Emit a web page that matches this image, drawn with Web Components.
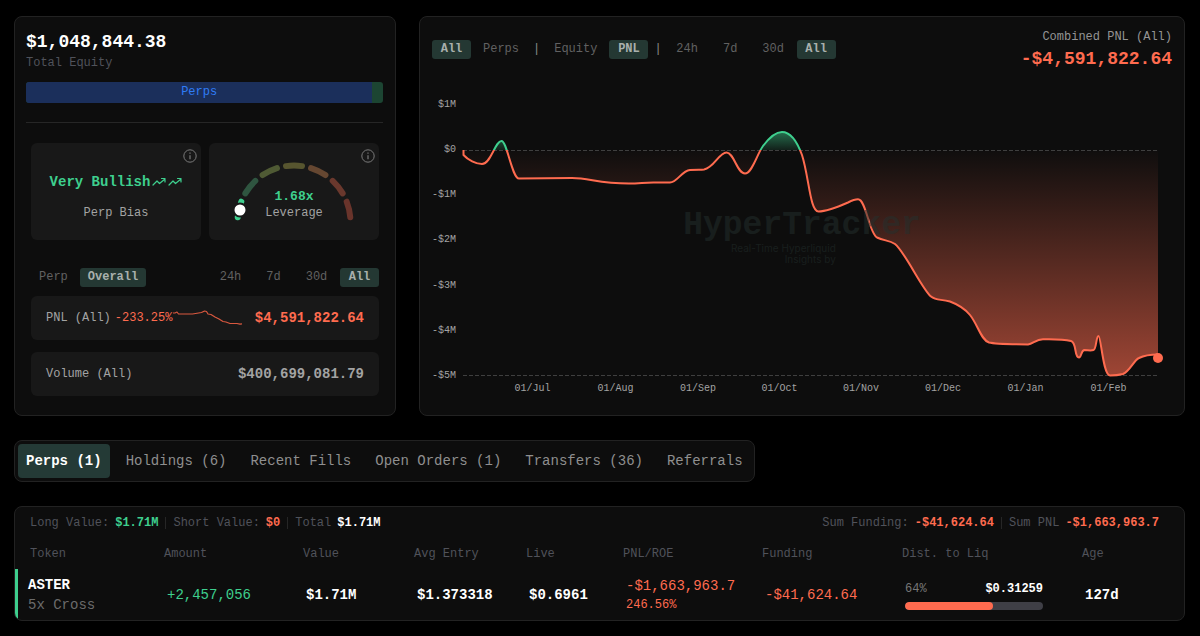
<!DOCTYPE html>
<html lang="en">
<head>
<meta charset="utf-8">
<title>Trader overview</title>
<style>
  body {
    margin: 0;
    background: #000;
    color: #a3a3a3;
    font-family: "Liberation Mono", "DejaVu Sans Mono", monospace;
    font-size: 12px;
    line-height: 20px;
    --card: #0d0d0d;
    --edge: #222;
    --box: #181818;
    --pill: #243833;
    --muted: #50525a;
    --dim: #616161;
    --soft: #a3a3a3;
    --green: #3ecf8e;
    --red: #ff6b4f;
  }
</style>
</head>
<body>
<trader-dashboard></trader-dashboard>

<script>
const define = (name, html) => {
  const template = document.createElement('template');
  template.innerHTML = html;
  customElements.define(name, class extends HTMLElement {
    constructor() {
      super();
      this.attachShadow({ mode: 'open' }).append(template.content.cloneNode(true));
    }
  });
};

/* Bordered surface */
define('panel-card', `
<style>
  :host { display: block; box-sizing: border-box; background: var(--card); border: 1px solid var(--edge); border-radius: 8px; }
</style>
<slot></slot>`);

/* Small filter button */
class PillButton extends HTMLElement {
  constructor() {
    super();
    this.attachShadow({ mode: 'open' }).innerHTML = `
<style>
  :host { display: block; }
  button { display: block; min-width: 39px; height: 19px; padding: 0 8px; border: 0; border-radius: 3px; background: none; color: var(--dim); font: inherit; line-height: 19px; cursor: pointer; }
  :host([active]) button { background: var(--pill); color: #a9b0ad; font-weight: bold; }
</style>
<button type="button" aria-pressed="${this.hasAttribute('active')}"><slot></slot></button>`;
  }
}
customElements.define('pill-button', PillButton);

/* Tile with an info button in its corner */
define('stat-tile', `
<style>
  :host { display: block; position: relative; flex: 1; height: 97px; border-radius: 6px; background: var(--box); text-align: center; }
  button { position: absolute; top: 6px; right: 4px; width: 14px; height: 14px; padding: 0; border: 0; background: none; color: #7a7a7a; }
  svg { display: block; }
</style>
<slot></slot>
<button type="button" aria-label="More information">
  <svg width="14" height="14" viewBox="0 0 14 14" fill="none" stroke="currentColor"><circle cx="7" cy="7" r="6.2"/><path d="M7 6.2v4M7 3.6v1.2" stroke-width="1.2"/></svg>
</button>`);

define('bias-stat', `
<style>
  :host { display: flex; flex-direction: column; align-items: center; gap: 11px; padding-top: 29px; }
  .value { display: flex; align-items: center; gap: 2px; color: var(--green); font-size: 14px; font-weight: bold; }
  .label { color: var(--soft); }
  svg { fill: none; stroke: currentColor; stroke-width: 1.2; stroke-linecap: round; stroke-linejoin: round; }
</style>
<span class="value">Very Bullish
  <svg width="14" height="10" viewBox="0 0 14 10"><path d="M1 8l4-4 2.5 2.5L13 2M9.5 1.5H13V5"/></svg>
  <svg width="14" height="10" viewBox="0 0 14 10"><path d="M1 8l4-4 2.5 2.5L13 2M9.5 1.5H13V5"/></svg>
</span>
<span class="label">Perp Bias</span>`);

/* Seven-step half-circle gauge */
class LeverageGauge extends HTMLElement {
  constructor() {
    super();
    const colors = ['#3ecf8e', '#2f5540', '#4f5a34', '#57552f', '#654731', '#6a382d', '#69342b'];
    const arcs = colors.map((c, i) =>
      `<path d="M-8 -55.9A56.5 56.5 0 0 1 8 -55.9" stroke="${c}" transform="rotate(${(i - 3) * 25.7})"/>`).join('');
    this.attachShadow({ mode: 'open' }).innerHTML = `
<style>
  :host { display: block; position: relative; padding-top: 17px; }
  svg { display: block; margin: 0 auto; }
  .text { position: absolute; inset: 46px 0 auto; display: flex; flex-direction: column; line-height: 16px; }
  strong { color: var(--green); font-size: 13px; }
  span { color: var(--soft); }
</style>
<svg width="122" height="64" viewBox="-61 -62 122 64" fill="none" stroke-width="6" stroke-linecap="round">
  ${arcs}<circle cx="-54" cy="-12" r="6.5" fill="#fff" stroke="#181818" stroke-width="2"/>
</svg>
<div class="text"><strong>1.68x</strong><span>Leverage</span></div>`;
  }
}
customElements.define('leverage-gauge', LeverageGauge);

define('figure-row', `
<style>
  :host { display: flex; align-items: center; height: 44px; padding: 0 15px; border-radius: 6px; background: var(--box); color: var(--soft); }
  ::slotted([slot=value]) { margin-left: auto; font-size: 14px; font-weight: bold; }
</style>
<slot></slot><slot name="value"></slot>`);

define('equity-card', `
<style>
  :host { display: block; }
  panel-card { height: 100%; padding: 13px 12px 19px 11px; }
  h1 { margin: 0; color: #fff; font-size: 18px; line-height: 24px; }
  .sub { color: var(--muted); line-height: 18px; }
  .split { display: flex; height: 21px; margin-top: 10px; border-radius: 3px; overflow: hidden; background: #1c4532; }
  .split span { flex: 0 0 97%; background: #1b2f5b; color: #2f7cf6; text-align: center; line-height: 21px; }
  hr { height: 1px; margin: 19px 0 20px; border: 0; background: #262626; }
  .body { padding: 0 4px 0 5px; }
  .tiles { display: flex; gap: 8px; }
  .filters { display: flex; justify-content: space-between; margin: 28px 0 9px; }
  .filters div { display: flex; gap: 4px; }
  .rows { display: grid; gap: 12px; }
  .down { color: var(--red); }
  .pct { margin-left: 4px; }
</style>
<panel-card>
  <h1>$1,048,844.38</h1>
  <div class="sub">Total Equity</div>
  <div class="split"><span>Perps</span></div>
  <hr>
  <div class="body">
    <div class="tiles">
      <stat-tile><bias-stat></bias-stat></stat-tile>
      <stat-tile><leverage-gauge></leverage-gauge></stat-tile>
    </div>
    <div class="filters">
      <div><pill-button>Perp</pill-button><pill-button active>Overall</pill-button></div>
      <div><pill-button>24h</pill-button><pill-button>7d</pill-button><pill-button>30d</pill-button><pill-button active>All</pill-button></div>
    </div>
    <div class="rows">
      <figure-row>
        <span>PNL (All)</span><span class="down pct">-233.25%</span>
        <svg width="70" height="18" viewBox="0 0 70 18" fill="none" stroke="#d9583f" stroke-width="1.2" stroke-linejoin="round"><path d="M1 4h2l2-1 1.500 2h14l6-1 3-.5 3-1.500 2 .5 1.500 2.500 3 .5 4 2.500 4 2 4 2.500 3 .5 4 1.500h7l3 .7 2-.4"/></svg>
        <span slot="value" class="down">$4,591,822.64</span>
      </figure-row>
      <figure-row><span>Volume (All)</span><span slot="value">$400,699,081.79</span></figure-row>
    </div>
  </div>
</panel-card>`);

const LINE = 'M463.500 150V155C468 160 476 164 482 164C491 164 495 141 501.500 141C507 141 512 178.500 519 178.500L572 178C590 178 598 183.500 629 183.500C640 183.500 645 182.300 655 182.500H670C677 182.500 682 170.500 690 170C699 169.500 700 170 704 169.500C714 168 719 152.500 726.500 152.500C734 152.500 737 173.500 745 173.500C752 173.500 757 154 763 146C769 138 776 132 782 132C791 132 798 144 802 155C809 177 810 211.500 818.500 211.500C826 211.500 840 206 848 202.500C852 200.500 855 199.300 858 199.300C866 199.300 869 233 877 237.500C884 241 889 240 895 244C905 252 922 289 931 296.500C936 300.500 940 299 950 301.500C958 304.500 966 310 970 315C978 325 981 340 989 342.500C995 344 1010 344.300 1028 344.500C1033 344 1036 339.300 1043 339.300C1050 339.300 1062 338.800 1071 341C1077 342.500 1074 357.500 1079 357.500C1081.500 357.500 1081 350.200 1084.500 350C1088 350 1090 351 1093.500 350C1096.500 349.500 1096 336 1098.500 336C1101 336 1103 375.300 1110 375.500C1115 375.500 1119 375 1123 374C1130 371 1134 360 1139 358C1145 355 1151 354.500 1158 354.500';

define('pnl-chart', `
<style>
  :host { display: grid; grid-template-columns: 24px 1fr; column-gap: 7px; position: relative; padding-right: 14px; font-size: 10px; color: var(--soft); }
  .y { display: flex; flex-direction: column; justify-content: space-between; text-align: right; line-height: 16px; }
  svg { display: block; width: 100%; height: 271px; margin: 8px 0; overflow: visible; }
  svg * { vector-effect: non-scaling-stroke; }
  .x { grid-column: 2; display: grid; grid-template-columns: 83fr 83fr 82fr 81fr 82fr 82fr 83fr 83fr; padding: 0 8px 0 28px; text-align: center; line-height: 10px; }
  .mark { position: absolute; inset: 112px 0 auto; display: grid; justify-content: center; color: #24302e; opacity: .5; text-align: right; pointer-events: none; }
  .mark b { font-size: 33px; line-height: 34px; }
  .mark span { padding-right: 85px; font-family: Inter, sans-serif; line-height: 11px; }
</style>
<div class="y"><span>$1M</span><span>$0</span><span>-$1M</span><span>-$2M</span><span>-$3M</span><span>-$4M</span><span>-$5M</span></div>
<svg viewBox="463 105 695 271" preserveAspectRatio="none" fill="none" role="img" aria-label="Combined PNL over time">
  <defs>
    <linearGradient id="loss" gradientUnits="userSpaceOnUse" x1="0" y1="150" x2="0" y2="376"><stop stop-color="#ff6b4f" stop-opacity="0.01"/><stop offset="1" stop-color="#ff6b4f" stop-opacity="0.6"/></linearGradient>
    <linearGradient id="gain" gradientUnits="userSpaceOnUse" x1="0" y1="132" x2="0" y2="150"><stop stop-color="#3ecf8e" stop-opacity="0.5"/><stop offset="1" stop-color="#3ecf8e" stop-opacity="0.1"/></linearGradient>
    <linearGradient id="stroke" gradientUnits="userSpaceOnUse" x1="0" y1="132" x2="0" y2="376"><stop offset="0.074" stop-color="#3ecf8e"/><stop offset="0.074" stop-color="#ff6b4f"/></linearGradient>
    <clipPath id="below"><path d="M463 150H1158V376H463z"/></clipPath>
    <clipPath id="above"><path d="M463 105H1158V150H463z"/></clipPath>
  </defs>
  <path d="${LINE}V150z" fill="url(#loss)" clip-path="url(#below)"/>
  <path d="${LINE}V150z" fill="url(#gain)" clip-path="url(#above)"/>
  <path d="M463 150.500H1158M463 375.500H1158" stroke="#3f3f3f" stroke-dasharray="4 2"/>
  <path d="${LINE}" stroke="url(#stroke)" stroke-width="2" stroke-linejoin="round"/>
  <path d="M1158 358h0.010" stroke="#ff6b4f" stroke-width="10" stroke-linecap="round"/>
</svg>
<div class="x"><span>01/Jul</span><span>01/Aug</span><span>01/Sep</span><span>01/Oct</span><span>01/Nov</span><span>01/Dec</span><span>01/Jan</span><span>01/Feb</span></div>
<div class="mark"><b>HyperTracker</b><span>Real-Time Hyperliquid</span><span>Insights by</span></div>`);

define('chart-card', `
<style>
  :host { display: block; }
  panel-card { height: 100%; padding: 10px 12px; }
  header { display: flex; align-items: center; justify-content: space-between; margin-bottom: 26px; }
  .filters { display: flex; align-items: center; gap: 4px; }
  i { margin: 0 2px; font-style: normal; color: #8a8a8a; }
  .total { text-align: right; color: #949494; }
  strong { display: block; color: var(--red); font-size: 18px; line-height: 24px; }
</style>
<panel-card>
  <header>
    <div class="filters">
      <pill-button active>All</pill-button><pill-button>Perps</pill-button><i>|</i>
      <pill-button>Equity</pill-button><pill-button active>PNL</pill-button><i>|</i>
      <pill-button>24h</pill-button><pill-button>7d</pill-button><pill-button>30d</pill-button><pill-button active>All</pill-button>
    </div>
    <div class="total">Combined PNL (All)<strong>-$4,591,822.64</strong></div>
  </header>
  <pnl-chart></pnl-chart>
</panel-card>`);

define('section-tabs', `
<style>
  :host { display: flex; }
  div { display: flex; gap: 8px; padding: 3px; }
  button { height: 34px; padding: 0 8px; border: 0; border-radius: 4px; background: none; color: #8f8f8f; font: inherit; font-size: 14px; white-space: nowrap; cursor: pointer; }
  [aria-selected=true] { background: #243a36; color: #fff; font-weight: bold; }
</style>
<panel-card><div role="tablist">
  <button type="button" role="tab" aria-selected="true">Perps (1)</button>
  <button type="button" role="tab" aria-selected="false">Holdings (6)</button>
  <button type="button" role="tab" aria-selected="false">Recent Fills</button>
  <button type="button" role="tab" aria-selected="false">Open Orders (1)</button>
  <button type="button" role="tab" aria-selected="false">Transfers (36)</button>
  <button type="button" role="tab" aria-selected="false">Referrals</button>
</div></panel-card>`);

define('positions-card', `
<style>
  :host { display: block; }
  panel-card { overflow: hidden; }
  .sums { display: flex; justify-content: space-between; height: 31px; padding: 0 25px 0 15px; color: var(--muted); line-height: 30px; }
  .sums div { display: flex; align-items: center; }
  .sums b { margin-left: 6px; }
  .sums i { width: 1px; height: 12px; margin: 0 7px; background: #262626; }
  .total { color: #fff; }
  table { width: 100%; table-layout: fixed; border-collapse: separate; border-spacing: 0; }
  th { height: 31px; padding: 0 0 0 15px; color: var(--muted); font-weight: normal; text-align: left; }
  td { height: 51px; padding: 0 0 0 18px; color: #fff; font-size: 14px; font-weight: bold; }
  td:first-child { padding-left: 10px; border-left: 3px solid var(--green); }
  td span { display: block; }
  .sub { color: #6b6b6b; font-weight: normal; }
  .up { color: var(--green); }
  .down { color: var(--red); }
  .plain { font-weight: normal; }
  .roe { font-size: 12px; line-height: 18px; }
  .liq { padding-right: 24px; }
  .ends { display: flex; justify-content: space-between; font-size: 12px; line-height: 18px; }
  .ends span:first-child { color: #777; font-weight: normal; }
  .track { height: 8px; margin-top: 4px; border-radius: 4px; background: #3f3f46; overflow: hidden; }
  .track div { width: 64%; height: 100%; border-radius: 4px; background: var(--red); }
</style>
<panel-card>
  <div class="sums">
    <div>Long Value:<b class="up">$1.71M</b><i></i>Short Value:<b class="down">$0</b><i></i>Total<b class="total">$1.71M</b></div>
    <div>Sum Funding:<b class="down">-$41,624.64</b><i></i>Sum PNL<b class="down">-$1,663,963.7</b></div>
  </div>
  <table>
    <colgroup>
      <col style="width:134px"><col style="width:139px"><col style="width:111px"><col style="width:112px"><col style="width:97px"><col style="width:139px"><col style="width:140px"><col style="width:180px"><col style="width:117px">
    </colgroup>
    <thead><tr><th>Token</th><th>Amount</th><th>Value</th><th>Avg Entry</th><th>Live</th><th>PNL/ROE</th><th>Funding</th><th>Dist. to Liq</th><th>Age</th></tr></thead>
    <tbody><tr>
      <td><span>ASTER</span><span class="sub">5x Cross</span></td>
      <td class="up plain">+2,457,056</td>
      <td>$1.71M</td>
      <td>$1.373318</td>
      <td>$0.6961</td>
      <td class="down plain"><span>-$1,663,963.7</span><span class="roe">246.56%</span></td>
      <td class="down plain">-$41,624.64</td>
      <td class="liq"><div class="ends"><span>64%</span><span>$0.31259</span></div><div class="track"><div></div></div></td>
      <td>127d</td>
    </tr></tbody>
  </table>
</panel-card>`);

define('trader-dashboard', `
<style>
  :host { display: flex; flex-direction: column; gap: 24px; padding: 16px 15px 15px 14px; }
  .top { display: grid; grid-template-columns: 382fr 766fr; gap: 23px; }
</style>
<div class="top"><equity-card></equity-card><chart-card></chart-card></div>
<section-tabs></section-tabs>
<positions-card></positions-card>`);
</script>
</body>
</html>
